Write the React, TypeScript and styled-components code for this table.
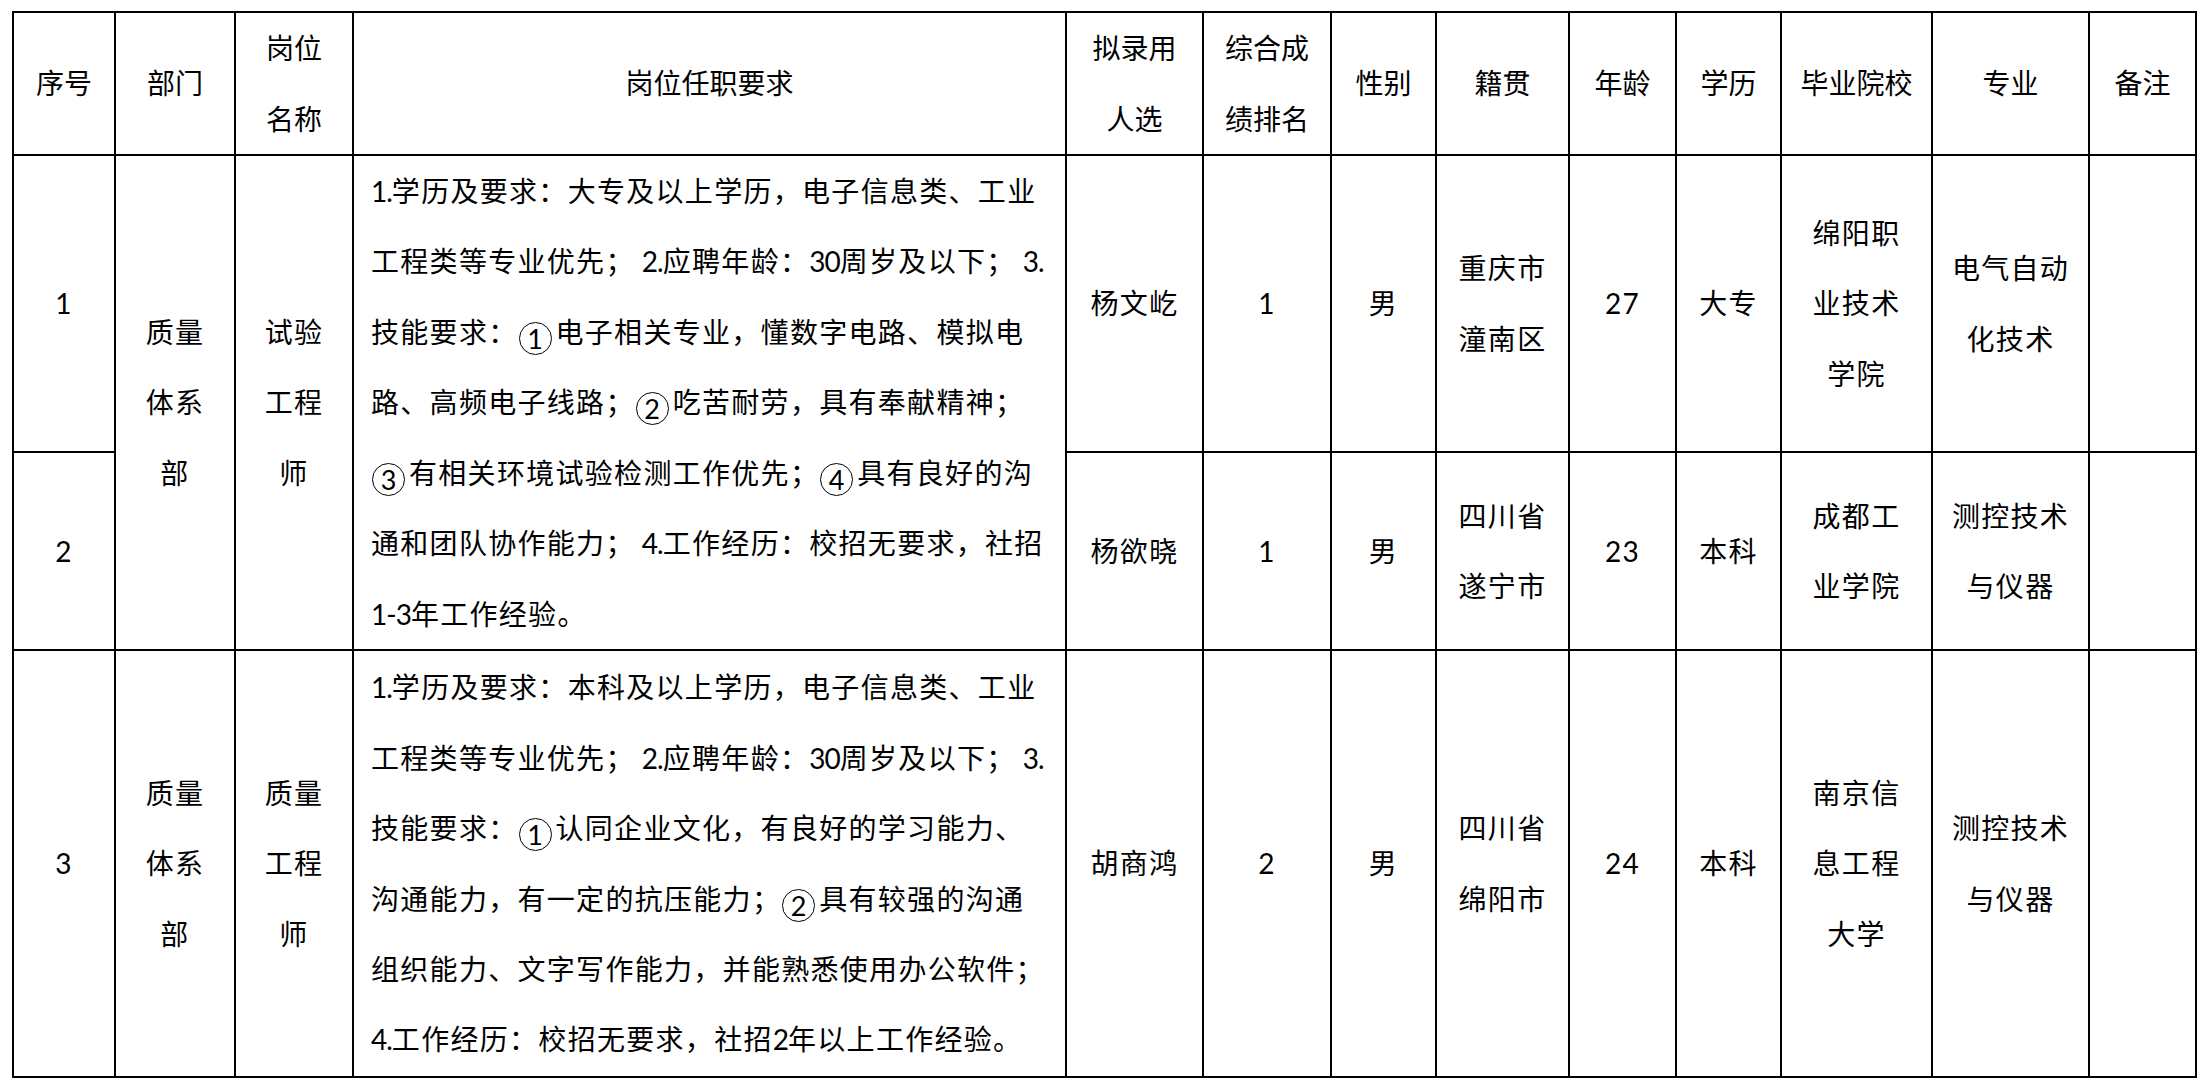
import React from "react";
import styled, { createGlobalStyle } from "styled-components";

const GlobalStyle = createGlobalStyle`
  html, body {
    margin: 0;
    padding: 0;
    background: #ffffff;
  }
  body {
    font-family: "Lato", "Noto Sans CJK SC", sans-serif;
    color: #000;
    text-autospace: no-autospace;
  }
`;

const Page = styled.div`
  padding: 11px 0 0 12px;
`;

const Grid = styled.div`
  display: grid;
  width: fit-content;
  grid-template-columns: 100px 118px 116px 711px 135px 126px 103px 131px 105px 103px 149px 155px 105px;
  grid-template-rows: 141px 295px 196px 425px;
  gap: 2px;
  padding: 2px;
  background: #000;
`;

const Cell = styled.div<{ $span?: number }>`
  background: #fff;
  display: flex;
  flex-direction: column;
  align-items: center;
  justify-content: center;
  text-align: center;
  grid-row: span ${(p) => p.$span ?? 1};
  font-size: 28px;
  letter-spacing: 1.3px;
  line-height: 70.4px;
  color: #000;
  min-width: 0;
  overflow: hidden;
`;

const HeadCell = styled(Cell)`
  letter-spacing: 0;
`;

const DescCell = styled(Cell)`
  align-items: flex-start;
  text-align: left;
  padding-left: 17px;
`;

const Line = styled.div`
  white-space: nowrap;
`;

const Num = styled.span`
  font-family: "Lato", sans-serif;
  letter-spacing: -1px;
  word-spacing: 1px;
`;

const Circled = styled.span`
  display: inline-flex;
  align-items: center;
  justify-content: center;
  box-sizing: border-box;
  width: 33px;
  height: 33px;
  border: 1.7px solid #000;
  border-radius: 50%;
  font-family: "Lato", sans-serif;
  font-size: 27px;
  line-height: 1;
  letter-spacing: 0;
  vertical-align: -6px;
  margin: 0 4px 0 1px;
`;

type Row = {
  no: string;
  dept?: string[];
  post?: string[];
  desc?: string[];
  span?: number;
  name: string;
  rank: string;
  sex: string;
  origin: string[];
  age: string;
  edu: string;
  school: string[];
  major: string[];
  note: string;
};

const headers: string[][] = [
  ["序号"],
  ["部门"],
  ["岗位", "名称"],
  ["岗位任职要求"],
  ["拟录用", "人选"],
  ["综合成", "绩排名"],
  ["性别"],
  ["籍贯"],
  ["年龄"],
  ["学历"],
  ["毕业院校"],
  ["专业"],
  ["备注"],
];

const rows: Row[] = [
  {
    no: "1",
    dept: ["质量", "体系", "部"],
    post: ["试验", "工程", "师"],
    span: 2,
    desc: [
      "1.学历及要求：大专及以上学历，电子信息类、工业",
      "工程类等专业优先； 2.应聘年龄：30周岁及以下； 3.",
      "技能要求：①电子相关专业，懂数字电路、模拟电",
      "路、高频电子线路；②吃苦耐劳，具有奉献精神；",
      "③有相关环境试验检测工作优先；④具有良好的沟",
      "通和团队协作能力； 4.工作经历：校招无要求，社招",
      "1-3年工作经验。",
    ],
    name: "杨文屹",
    rank: "1",
    sex: "男",
    origin: ["重庆市", "潼南区"],
    age: "27",
    edu: "大专",
    school: ["绵阳职", "业技术", "学院"],
    major: ["电气自动", "化技术"],
    note: "",
  },
  {
    no: "2",
    name: "杨欲晓",
    rank: "1",
    sex: "男",
    origin: ["四川省", "遂宁市"],
    age: "23",
    edu: "本科",
    school: ["成都工", "业学院"],
    major: ["测控技术", "与仪器"],
    note: "",
  },
  {
    no: "3",
    dept: ["质量", "体系", "部"],
    post: ["质量", "工程", "师"],
    span: 1,
    desc: [
      "1.学历及要求：本科及以上学历，电子信息类、工业",
      "工程类等专业优先； 2.应聘年龄：30周岁及以下； 3.",
      "技能要求：①认同企业文化，有良好的学习能力、",
      "沟通能力，有一定的抗压能力；②具有较强的沟通",
      "组织能力、文字写作能力，并能熟悉使用办公软件；",
      "4.工作经历：校招无要求，社招2年以上工作经验。",
    ],
    name: "胡商鸿",
    rank: "2",
    sex: "男",
    origin: ["四川省", "绵阳市"],
    age: "24",
    edu: "本科",
    school: ["南京信", "息工程", "大学"],
    major: ["测控技术", "与仪器"],
    note: "",
  },
];

const circledMap: Record<string, string> = { "①": "1", "②": "2", "③": "3", "④": "4" };

const RichLine: React.FC<{ text: string }> = ({ text }) => {
  const parts = text.split(/([①②③④]| ?[0-9.\-]+)/).filter((p) => p !== "");
  return (
    <Line>
      {parts.map((p, i) => {
        if (circledMap[p]) {
          return (
            <Circled key={i} aria-label={p}>
              {circledMap[p]}
            </Circled>
          );
        }
        if (/^ ?[0-9.\-]+$/.test(p)) {
          return <Num key={i}>{p}</Num>;
        }
        return <React.Fragment key={i}>{p}</React.Fragment>;
      })}
    </Line>
  );
};

const Lines: React.FC<{ lines: string[] }> = ({ lines }) => (
  <>
    {lines.map((l, i) => (
      <Line key={i}>{l}</Line>
    ))}
  </>
);

export default function App() {
  return (
    <>
      <GlobalStyle />
      <Page>
        <Grid>
          {headers.map((h, i) => (
            <HeadCell key={`h${i}`}>
              <Lines lines={h} />
            </HeadCell>
          ))}
          {rows.map((r, ri) => (
            <React.Fragment key={`r${ri}`}>
              <Cell>
                <Line>{r.no}</Line>
              </Cell>
              {r.dept && (
                <Cell $span={r.span}>
                  <Lines lines={r.dept} />
                </Cell>
              )}
              {r.post && (
                <Cell $span={r.span}>
                  <Lines lines={r.post} />
                </Cell>
              )}
              {r.desc && (
                <DescCell $span={r.span}>
                  {r.desc.map((l, i) => (
                    <RichLine key={i} text={l} />
                  ))}
                </DescCell>
              )}
              <Cell>
                <Line>{r.name}</Line>
              </Cell>
              <Cell>
                <Line>{r.rank}</Line>
              </Cell>
              <Cell>
                <Line>{r.sex}</Line>
              </Cell>
              <Cell>
                <Lines lines={r.origin} />
              </Cell>
              <Cell>
                <Line>{r.age}</Line>
              </Cell>
              <Cell>
                <Line>{r.edu}</Line>
              </Cell>
              <Cell>
                <Lines lines={r.school} />
              </Cell>
              <Cell>
                <Lines lines={r.major} />
              </Cell>
              <Cell>
                <Line>{r.note}</Line>
              </Cell>
            </React.Fragment>
          ))}
        </Grid>
      </Page>
    </>
  );
}
